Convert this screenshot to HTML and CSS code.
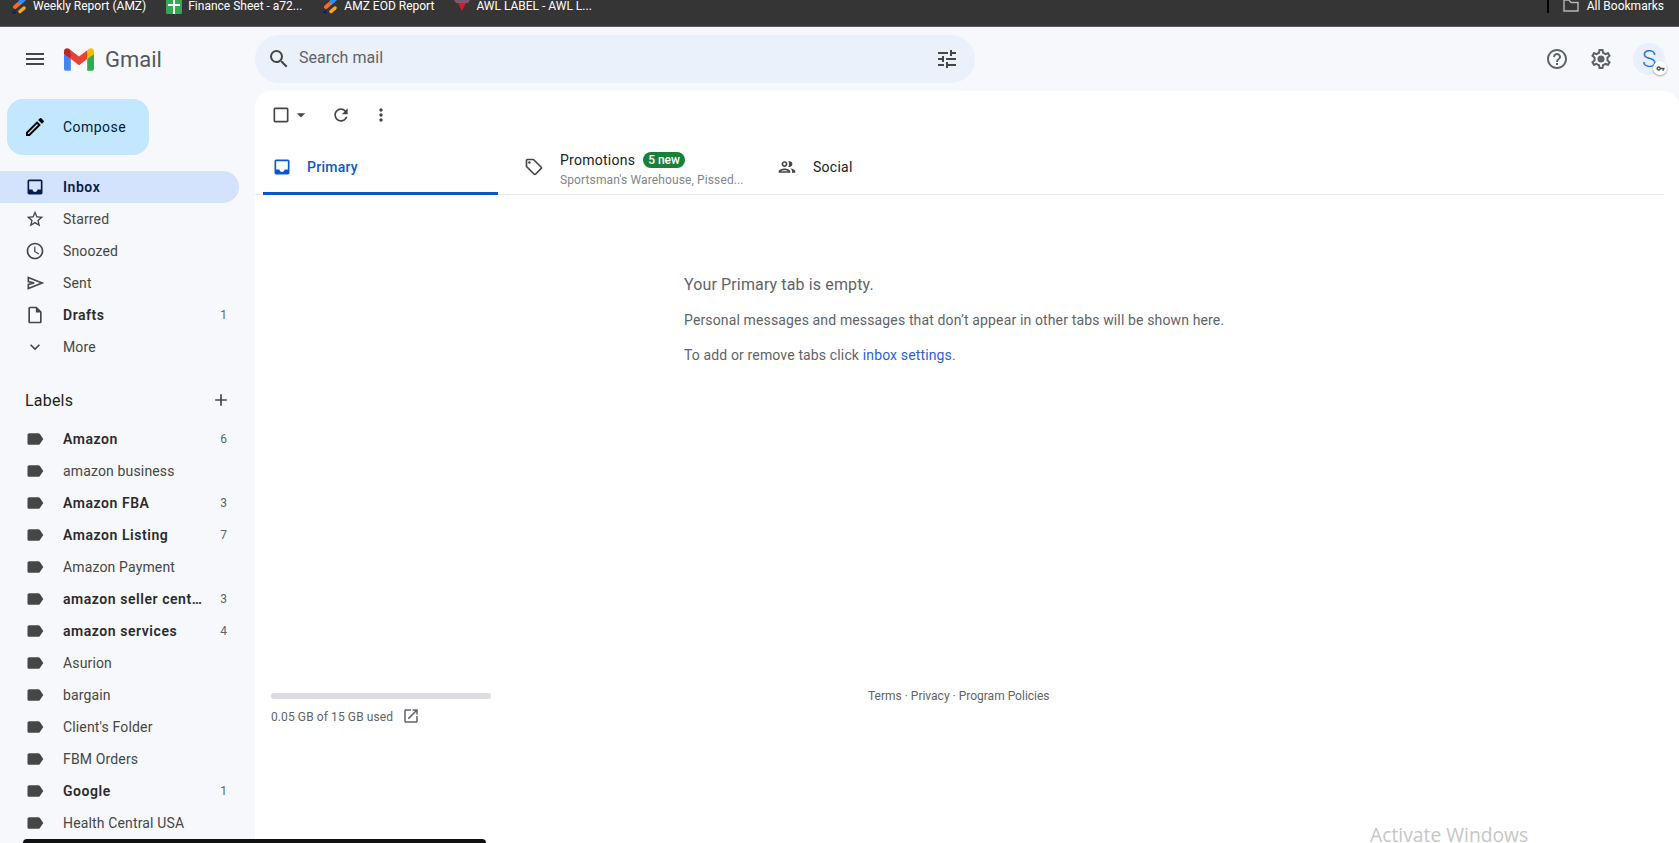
FILE: index.html
```html
<!DOCTYPE html>
<html lang="en">
<head>
  <meta charset="UTF-8" />
  <meta name="viewport" content="width=device-width, initial-scale=1.0" />
  <title>Inbox - Gmail</title>
  <link rel="stylesheet" href="styles.css">
</head>
<body>
  <div class="bookmarks">
    <div class="bm-item">
      <svg class="bm-icon" viewBox="0 0 16 14"><path d="M4 7 11 1" stroke="#f56a2c" stroke-width="4" stroke-linecap="round"/><path d="M8 0h7l-3 3H7z" fill="#2f8cf0"/><path d="M9 11.500 13 8" stroke="#f9a825" stroke-width="3.500" stroke-linecap="round"/><path d="M1 11.500 4 10l1 3.500H1z" fill="#12235a"/></svg>
      <span>Weekly Report (AMZ)</span>
    </div>
    <div class="bm-item">
      <svg class="bm-icon" viewBox="0 0 16 14"><path d="M0 0h16v12.500a1.500 1.500 0 0 1-1.500 1.500h-13A1.500 1.500 0 0 1 0 12.500z" fill="#34a853"/><path d="M7 0h2v4h5v2H9v8H7V6H2V4h5z" fill="#fff"/></svg>
      <span>Finance Sheet - a72...</span>
    </div>
    <div class="bm-item">
      <svg class="bm-icon" viewBox="0 0 16 14"><path d="M4 7 11 1" stroke="#f56a2c" stroke-width="4" stroke-linecap="round"/><path d="M8 0h7l-3 3H7z" fill="#2f8cf0"/><path d="M9 11.500 13 8" stroke="#f9a825" stroke-width="3.500" stroke-linecap="round"/><path d="M1 11.500 4 10l1 3.500H1z" fill="#12235a"/></svg>
      <span>AMZ EOD Report</span>
    </div>
    <div class="bm-item">
      <svg class="bm-icon" viewBox="0 0 16 14"><path d="M0 0h16l-2 3H2z" fill="#7d5a6b"/><path d="M4 3h8l-4 8z" fill="#e8112d"/></svg>
      <span>AWL LABEL - AWL L...</span>
    </div>
    <div class="bm-right">
      <div class="bm-divider"></div>
      <div class="bm-item">
        <svg class="bm-folder" viewBox="0 0 16 12"><path d="M1 0v11h14V2.500H8L6 0z" fill="none" stroke="#b5b5b5" stroke-width="1.400"/></svg>
        <span>All Bookmarks</span>
      </div>
    </div>
  </div>

  <header class="topbar">
    <div class="brand">
      <svg class="menu-icon" viewBox="0 0 24 24"><path d="M3 18h18v-2H3v2zm0-5h18v-2H3v2zm0-7v2h18V6H3z"/></svg>
      <svg class="logo" viewBox="0 0 256 193">
        <path d="M58.182 192.05V93.14L27.507 65.077 0 49.504v125.091c0 9.658 7.825 17.455 17.455 17.455h40.727z" fill="#4285F4"/>
        <path d="M197.818 192.05h40.727c9.659 0 17.455-7.826 17.455-17.455V49.505l-31.156 17.837-27.026 25.798v98.91z" fill="#34A853"/>
        <path d="M58.182 93.14l-4.174-38.647 4.174-36.989L128 69.868l69.818-52.364 4.669 34.992-4.669 40.644L128 145.504z" fill="#EA4335"/>
        <path d="M197.818 17.504V93.14L256 49.504V26.231c0-21.585-24.64-33.89-41.89-20.945l-16.292 12.218z" fill="#FBBC04"/>
        <path d="M0 49.504l26.759 20.07L58.182 93.14V17.504L41.89 5.286C24.61-7.66 0 4.646 0 26.23v23.273z" fill="#C5221F"/>
      </svg>
      <span class="brand-name">Gmail</span>
    </div>
    <div class="search">
      <svg class="search-icon" viewBox="0 0 24 24"><path d="M15.500 14h-.79l-.28-.27A6.471 6.471 0 0 0 16 9.500 6.500 6.500 0 1 0 9.500 16c1.610 0 3.090-.59 4.230-1.570l.27.28v.79l5 4.990L20.490 19l-4.990-5zm-6 0C7.010 14 5 11.990 5 9.500S7.010 5 9.500 5 14 7.010 14 9.500 11.990 14 9.500 14z"/></svg>
      <span class="search-text">Search mail</span>
      <svg class="tune-icon" viewBox="0 0 24 24"><path d="M3 17v2h6v-2H3zM3 5v2h10V5H3zm10 16v-2h8v-2h-8v-2h-2v6h2zM7 9v2H3v2h4v2h2V9H7zm14 4v-2H11v2h10zm-6-4h2V7h4V5h-4V3h-2v6z"/></svg>
    </div>
    <div class="top-actions">
      <svg class="top-icon" viewBox="0 0 24 24"><path d="M11 18h2v-2h-2v2zm1-16C6.480 2 2 6.480 2 12s4.480 10 10 10 10-4.480 10-10S17.520 2 12 2zm0 18c-4.410 0-8-3.590-8-8s3.590-8 8-8 8 3.590 8 8-3.590 8-8 8zm0-14c-2.210 0-4 1.790-4 4h2c0-1.100.9-2 2-2s2 .9 2 2c0 2-3 1.750-3 5h2c0-2.250 3-2.500 3-5 0-2.210-1.790-4-4-4z"/></svg>
      <svg class="top-icon" viewBox="0 0 24 24"><path d="M19.430 12.980c.04-.32.07-.64.07-.98 0-.34-.03-.66-.07-.98l2.110-1.650c.19-.15.24-.42.12-.64l-2-3.460c-.09-.16-.26-.25-.44-.25-.06 0-.12.01-.17.03l-2.490 1c-.52-.4-1.080-.73-1.690-.98l-.38-2.650C14.460 2.180 14.250 2 14 2h-4c-.25 0-.46.18-.49.42l-.38 2.650c-.61.25-1.170.59-1.690.98l-2.490-1c-.06-.02-.12-.03-.18-.03-.17 0-.34.09-.43.25l-2 3.460c-.13.22-.07.49.12.64l2.110 1.650c-.04.32-.07.65-.07.98 0 .33.03.66.07.98l-2.110 1.650c-.19.15-.24.42-.12.64l2 3.460c.09.16.26.25.44.25.06 0 .12-.01.17-.03l2.490-1c.52.4 1.080.73 1.690.98l.38 2.650c.03.24.24.42.49.42h4c.25 0 .46-.18.49-.42l.38-2.650c.61-.25 1.170-.59 1.690-.98l2.490 1c.06.02.12.03.18.03.17 0 .34-.09.43-.25l2-3.460c.12-.22.07-.49-.12-.64l-2.110-1.650zm-1.980-1.710c.04.31.05.52.05.73 0 .21-.02.43-.05.73l-.14 1.130.89.7 1.080.84-.7 1.210-1.270-.51-1.040-.42-.9.68c-.43.32-.84.56-1.250.73l-1.060.43-.16 1.130-.2 1.350h-1.400l-.19-1.350-.16-1.130-1.060-.43c-.43-.18-.83-.41-1.230-.71l-.91-.7-1.060.43-1.270.51-.7-1.210 1.080-.84.89-.7-.14-1.130c-.03-.31-.05-.54-.05-.74s.02-.43.05-.73l.14-1.130-.89-.7-1.080-.84.7-1.210 1.270.51 1.040.42.9-.68c.43-.32.84-.56 1.250-.73l1.060-.43.16-1.130.2-1.350h1.390l.19 1.350.16 1.130 1.060.43c.43.18.83.41 1.230.71l.91.7 1.060-.43 1.270-.51.7 1.210-1.070.85-.89.7.14 1.130z"/><circle cx="12" cy="12" r="3.500"/></svg>
      <div class="avatar">S
        <span class="key-badge"><svg viewBox="0 0 24 24"><path d="M12.650 10A6 6 0 1 0 12.650 14H17v4h4v-4h2v-4zM7 14a2 2 0 1 1 0-4 2 2 0 0 1 0 4z"/></svg></span>
      </div>
    </div>
  </header>

  <div class="layout">
    <aside class="sidebar">
      <button class="compose">
        <svg viewBox="0 0 24 24"><path d="M3 17.250V21h3.750L17.810 9.940l-3.750-3.750L3 17.250zM5.920 19H5v-.92l9.060-9.060.92.92L5.920 19zM20.710 5.630l-2.340-2.340c-.2-.2-.45-.29-.71-.29s-.51.1-.7.29l-1.830 1.830 3.750 3.750 1.830-1.830c.39-.39.39-1.020 0-1.410z"/></svg>
        Compose
      </button>

      <nav class="nav">
        <div class="nav-row active bold">
          <svg viewBox="0 0 24 24"><path d="M19 3H4.990c-1.110 0-1.980.89-1.980 2L3 19c0 1.100.88 2 1.990 2H19c1.100 0 2-.9 2-2V5c0-1.110-.9-2-2-2zm0 12h-4c0 1.660-1.350 3-3 3s-3-1.340-3-3H4.990V5H19v10z"/></svg>
          <span class="nav-name">Inbox</span>
        </div>
        <div class="nav-row">
          <svg viewBox="0 0 24 24"><path d="M22 9.240l-7.190-.62L12 2 9.190 8.630 2 9.240l5.460 4.730L5.820 21 12 17.270 18.180 21l-1.630-7.030L22 9.240zM12 15.400l-3.760 2.270 1-4.280-3.320-2.880 4.380-.38L12 6.100l1.710 4.040 4.380.38-3.320 2.880 1 4.280L12 15.400z"/></svg>
          <span class="nav-name">Starred</span>
        </div>
        <div class="nav-row">
          <svg viewBox="0 0 24 24"><path d="M11.990 2C6.470 2 2 6.480 2 12s4.470 10 9.990 10C17.520 22 22 17.520 22 12S17.520 2 11.990 2zM12 20c-4.420 0-8-3.580-8-8s3.580-8 8-8 8 3.580 8 8-3.580 8-8 8zm.5-13H11v6l5.250 3.150.75-1.230-4.500-2.670z"/></svg>
          <span class="nav-name">Snoozed</span>
        </div>
        <div class="nav-row">
          <svg class="sent-icon" viewBox="0 0 24 24"><path d="M4 5.500 20.500 12 4 18.500v-4.800l7-1.700-7-1.700z"/></svg>
          <span class="nav-name">Sent</span>
        </div>
        <div class="nav-row bold">
          <svg viewBox="0 0 24 24"><path d="M14 2H6c-1.100 0-2 .9-2 2v16c0 1.100.89 2 1.990 2H18c1.100 0 2-.9 2-2V8l-6-6zM6 20V4h7v5h5v11H6z"/></svg>
          <span class="nav-name">Drafts</span>
          <span class="nav-count">1</span>
        </div>
        <div class="nav-row">
          <svg viewBox="0 0 24 24"><path d="M16.590 8.590L12 13.170 7.410 8.590 6 10l6 6 6-6z"/></svg>
          <span class="nav-name">More</span>
        </div>
      </nav>

      <div class="labels-head">
        <span>Labels</span>
        <svg viewBox="0 0 24 24"><path d="M19 13h-6v6h-2v-6H5v-2h6V5h2v6h6v2z"/></svg>
      </div>

      <div class="nav" id="labels"></div>
    </aside>

    <main class="panel">
      <div class="toolbar">
        <svg class="tool-icon" viewBox="0 0 24 24"><path d="M19 5v14H5V5h14m0-2H5c-1.100 0-2 .9-2 2v14c0 1.100.9 2 2 2h14c1.100 0 2-.9 2-2V5c0-1.100-.9-2-2-2z"/></svg>
        <svg class="tool-caret" viewBox="0 0 24 24"><path d="M7 10l5 5 5-5z"/></svg>
        <svg class="tool-icon tool-refresh" viewBox="0 0 24 24"><path d="M17.650 6.350C16.200 4.900 14.210 4 12 4c-4.420 0-7.990 3.580-7.990 8s3.570 8 7.990 8c3.730 0 6.840-2.550 7.730-6h-2.080c-.82 2.330-3.040 4-5.650 4-3.310 0-6-2.690-6-6s2.690-6 6-6c1.660 0 3.140.69 4.220 1.780L13 11h7V4l-2.350 2.350z"/></svg>
        <svg class="tool-icon tool-more" viewBox="0 0 24 24"><path d="M12 8c1.100 0 2-.9 2-2s-.9-2-2-2-2 .9-2 2 .9 2 2 2zm0 2c-1.100 0-2 .9-2 2s.9 2 2 2 2-.9 2-2-.9-2-2-2zm0 6c-1.100 0-2 .9-2 2s.9 2 2 2 2-.9 2-2-.9-2-2-2z"/></svg>
      </div>

      <div class="tabs">
        <div class="tab tab-primary active">
          <svg viewBox="0 0 24 24"><path d="M19 3H4.990c-1.110 0-1.980.89-1.980 2L3 19c0 1.100.88 2 1.990 2H19c1.100 0 2-.9 2-2V5c0-1.110-.9-2-2-2zm0 12h-4c0 1.660-1.350 3-3 3s-3-1.340-3-3H4.990V5H19v10z"/></svg>
          <span>Primary</span>
        </div>
        <div class="tab tab-promo">
          <svg viewBox="0 0 24 24"><path d="M21.410 11.580l-9-9C12.050 2.220 11.550 2 11 2H4c-1.100 0-2 .9-2 2v7c0 .55.22 1.050.59 1.420l9 9c.36.36.86.58 1.410.58s1.050-.22 1.410-.59l7-7c.37-.36.59-.86.59-1.410s-.23-1.060-.59-1.420zM13 20.010L4 11V4h7v-.01l9 9-7 7.020z"/><circle cx="6.500" cy="6.500" r="1.500"/></svg>
          <div class="tab-text">
            <div class="tab-title">Promotions <span class="badge">5 new</span></div>
            <div class="tab-sub">Sportsman's Warehouse, Pissed...</div>
          </div>
        </div>
        <div class="tab tab-social">
          <svg viewBox="0 0 24 24"><path d="M9 13.750c-2.340 0-7 1.170-7 3.500V19h14v-1.750c0-2.330-4.660-3.500-7-3.500zM4.340 17c.84-.58 2.870-1.250 4.660-1.250s3.820.67 4.660 1.250H4.340zM9 12c1.930 0 3.500-1.570 3.500-3.500S10.930 5 9 5 5.500 6.570 5.500 8.500 7.070 12 9 12zm0-5c.83 0 1.500.67 1.500 1.500S9.830 10 9 10s-1.500-.67-1.500-1.500S8.170 7 9 7zm7.040 6.810c1.160.84 1.960 1.960 1.960 3.440V19h4v-1.750c0-2.020-3.500-3.170-5.960-3.440zM15 12c1.930 0 3.500-1.570 3.500-3.500S16.930 5 15 5c-.54 0-1.040.13-1.500.35.63.89 1 1.980 1 3.150s-.37 2.260-1 3.150c.46.22.96.35 1.500.35z"/></svg>
          <span>Social</span>
        </div>
      </div>

      <div class="empty">
        <h2>Your Primary tab is empty.</h2>
        <p>Personal messages and messages that don’t appear in other tabs will be shown here.</p>
        <p>To add or remove tabs click <a href="#">inbox settings</a>.</p>
      </div>

      <footer class="footer">
        <div class="storage">
          <div class="storage-bar"></div>
          <div class="storage-text">
            <span>0.05 GB of 15 GB used</span>
            <svg viewBox="0 0 24 24"><path d="M19 19H5V5h7V3H5c-1.110 0-2 .9-2 2v14c0 1.100.89 2 2 2h14c1.100 0 2-.9 2-2v-7h-2v7zM14 3v2h3.590l-9.830 9.830 1.410 1.410L19 6.410V10h2V3h-7z"/></svg>
          </div>
        </div>
        <div class="terms">Terms · Privacy · Program Policies</div>
      </footer>
    </main>
  </div>

  <div class="activate">Activate Windows</div>
  <div class="taskbar-peek"></div>

  <script>
    const labels = [
      { name: "Amazon", count: 6 },
      { name: "amazon business" },
      { name: "Amazon FBA", count: 3 },
      { name: "Amazon Listing", count: 7 },
      { name: "Amazon Payment" },
      { name: "amazon seller central", count: 3 },
      { name: "amazon services", count: 4 },
      { name: "Asurion" },
      { name: "bargain" },
      { name: "Client's Folder" },
      { name: "FBM Orders" },
      { name: "Google", count: 1 },
      { name: "Health Central USA" }
    ];

    const labelPath = "M17.63 5.84C17.27 5.33 16.67 5 16 5L5 5.01C3.9 5.01 3 5.9 3 7v10c0 1.1.9 1.99 2 1.99L16 19c.67 0 1.27-.33 1.63-.84L22 12l-4.37-6.16z";

    function renderLabels() {
      const list = document.getElementById("labels");
      labels.forEach(label => {
        const row = document.createElement("div");
        row.className = label.count ? "nav-row bold" : "nav-row";
        row.innerHTML = `
          <svg viewBox="0 0 24 24"><path d="${labelPath}"/></svg>
          <span class="nav-name">${label.name}</span>
          ${label.count ? `<span class="nav-count">${label.count}</span>` : ""}
        `;
        list.appendChild(row);
      });
    }

    renderLabels();
  </script>
</body>
</html>
```

FILE: styles.css
```css
html, body { height: 100%; }
body {
  margin: 0;
  height: 843px;
  overflow: hidden;
  position: relative;
  background: #f6f8fc;
  font-family: Roboto, Arial, sans-serif;
  color: #444746;
}

/* browser bookmarks bar, cut off by the top of the picture */
.bookmarks {
  display: flex;
  align-items: flex-start;
  height: 26px;
  padding-left: 11px;
  gap: 20px;
  background: #353535;
  border-bottom: 1px solid #5c5c5c;
  color: #fff;
  font-family: Roboto, Arial, sans-serif;
  font-size: 12px;
  line-height: 12px;
}
.bm-item { display: flex; align-items: flex-start; gap: 6px; white-space: nowrap; }
.bm-icon { width: 16px; height: 14px; flex: none; }
.bm-folder { width: 16px; height: 12px; flex: none; }
.bm-right { display: flex; align-items: flex-start; margin-left: auto; padding-right: 15px; gap: 14px; }
.bm-divider { width: 2px; height: 13px; background: #000; }
.bm-right .bm-item { gap: 8px; }

/* top bar */
.topbar { display: flex; height: 64px; }
.brand { display: flex; align-items: center; width: 255px; flex: none; padding-left: 23px; box-sizing: border-box; }
.menu-icon { width: 24px; height: 24px; fill: #444746; }
.logo { width: 30px; height: 23px; margin-left: 17px; }
.brand-name { margin-left: 11px; font-size: 22px; color: #54585c; }
.search {
  display: flex;
  align-items: center;
  width: 720px;
  height: 48px;
  margin-top: 8px;
  padding: 0 16px 0 12px;
  box-sizing: border-box;
  background: #eaf1fb;
  border-radius: 24px;
}
.search-icon { width: 24px; height: 24px; fill: #444746; }
.search-text { margin-left: 8px; font-size: 16px; letter-spacing: 0.05px; color: #5f6368; margin-top: -3px; }
.tune-icon { width: 24px; height: 24px; margin-left: auto; fill: #444746; }
.top-actions { display: flex; align-items: center; margin-left: auto; padding-right: 14px; }
.top-icon { width: 24px; height: 24px; margin-right: 20px; fill: #5f6368; }
.avatar {
  position: relative;
  width: 32px;
  height: 32px;
  border-radius: 50%;
  background: #e8f0fe;
  color: #1a73e8;
  font-size: 24px;
  font-weight: 300;
  line-height: 32px;
  text-align: center;
}
.key-badge {
  position: absolute;
  right: -2px;
  bottom: 0;
  display: flex;
  align-items: center;
  justify-content: center;
  width: 14px;
  height: 14px;
  background: #fff;
  border-radius: 50%;
  box-shadow: 0 1px 2px rgba(0,0,0,0.35);
}
.key-badge svg { width: 9px; height: 9px; fill: #555; }

/* main area */
.layout { display: flex; height: 752px; }
.sidebar { width: 255px; flex: none; overflow: hidden; }
.compose {
  display: flex;
  align-items: center;
  width: 142px;
  height: 56px;
  margin: 8px 0 16px 7px;
  padding: 0 0 0 16px;
  border: none;
  border-radius: 16px;
  background: #c2e7ff;
  color: #001d35;
  font-family: Roboto, Arial, sans-serif;
  font-size: 14px;
  font-weight: 400;
  letter-spacing: 0.45px;
  gap: 16px;
}
.compose svg { width: 24px; height: 24px; fill: #000; }

.nav { display: flex; flex-direction: column; }
.nav-row {
  display: flex;
  align-items: center;
  width: 239px;
  height: 32px;
  padding: 0 12px 0 25px;
  box-sizing: border-box;
  border-radius: 0 16px 16px 0;
  font-size: 14px;
  letter-spacing: 0.15px;
  color: #444746;
}
.nav-row svg { width: 20px; height: 20px; flex: none; fill: #444746; margin-right: 18px; }
.nav-row .sent-icon { fill: none; stroke: #444746; stroke-width: 2; }
.nav-name { flex: 1; min-width: 0; white-space: nowrap; overflow: hidden; text-overflow: ellipsis; }
.nav-count { font-size: 12px; font-weight: 400; letter-spacing: 0; color: #5f6368; margin-left: 15px; }
.nav-row.bold { font-weight: 600; letter-spacing: 0.55px; color: #2a2b2e; }
.nav-row.active { background: #d3e3fd; color: #041e49; }
.nav-row.active svg { fill: #041e49; }

.labels-head {
  display: flex;
  align-items: center;
  justify-content: space-between;
  width: 239px;
  height: 40px;
  margin-top: 17px;
  margin-bottom: 3px;
  padding: 0 8px 0 25px;
  box-sizing: border-box;
  font-size: 16px;
  letter-spacing: 0.2px;
  color: #1f1f1f;
}
.labels-head svg { width: 20px; height: 20px; fill: #444746; }

/* white panel */
.panel { flex: 1; min-width: 0; background: #fff; border-radius: 16px 16px 0 0; }
.toolbar { display: flex; align-items: center; height: 48px; padding-left: 16px; }
.tool-icon { width: 20px; height: 20px; fill: #444746; flex: none; }
.tool-caret { width: 20px; height: 20px; fill: #444746; flex: none; }
.tool-refresh { margin-left: 20px; }
.tool-more { margin-left: 20px; }

.tabs {
  display: flex;
  gap: 16px;
  height: 56px;
  margin-right: 15px;
  padding-left: 8px;
  border-bottom: 1px solid #e8eaed;
  box-sizing: border-box;
}
.tab { display: flex; align-items: center; box-sizing: border-box; height: 56px; font-size: 14px; letter-spacing: 0.25px; color: #202124; }
.tab svg { width: 20px; height: 20px; fill: #444746; flex: none; }
.tab-primary { width: 235px; padding-left: 9px; gap: 15px; }
.tab-primary.active { color: #0b57d0; border-top: 3px solid transparent; border-bottom: 3px solid #0b57d0; font-weight: 500; }
.tab-primary.active svg { fill: #0b57d0; }
.tab-promo { width: 238px; padding-left: 10px; gap: 16px; }
.tab-social { padding-left: 9px; gap: 16px; }
.tab-text { padding-top: 4px; }
.tab-title { display: flex; align-items: center; gap: 8px; }
.tab-sub { margin-top: 5px; font-size: 12px; letter-spacing: 0.12px; color: #80868b; white-space: nowrap; }
.badge {
  padding: 0 5px;
  height: 16px;
  line-height: 16px;
  background: #188038;
  color: #fff;
  font-size: 12px;
  font-weight: 500;
  letter-spacing: 0;
  border-radius: 8px;
}

.empty { padding: 80px 0 0 429px; }
.empty h2 { margin: 0; font-size: 16px; font-weight: 400; letter-spacing: 0.13px; line-height: 20px; color: #5f6368; }
.empty p { margin: 15px 0 0; font-size: 14px; letter-spacing: 0.14px; line-height: 20px; color: #5f6368; }
.empty a { color: #2f5fd0; text-decoration: none; }

.footer { display: flex; gap: 377px; margin-top: 323px; padding-left: 16px; }
.storage { width: 220px; padding-top: 5px; }
.storage-bar { height: 6px; background: #dadce0; border-radius: 3px; }
.storage-text { display: flex; align-items: center; gap: 9px; margin-top: 8px; font-size: 12px; letter-spacing: 0.1px; color: #5f6368; white-space: nowrap; }
.storage-text span { padding-top: 2px; }
.storage-text svg { width: 18px; height: 18px; fill: #5f6368; }
.terms { font-size: 12px; line-height: 16px; color: #5f6368; white-space: nowrap; }

/* things lying over the page */
.activate {
  position: absolute;
  left: 1370px;
  top: 827px;
  font-family: "Open Sans", Arial, sans-serif;
  font-size: 19.3px;
  line-height: 15px;
  color: #c6c6c6;
  white-space: nowrap;
}
.taskbar-peek {
  position: absolute;
  left: 23px;
  top: 839px;
  width: 463px;
  height: 4px;
  background: #111;
  border-radius: 4px 4px 0 0;
}
```
